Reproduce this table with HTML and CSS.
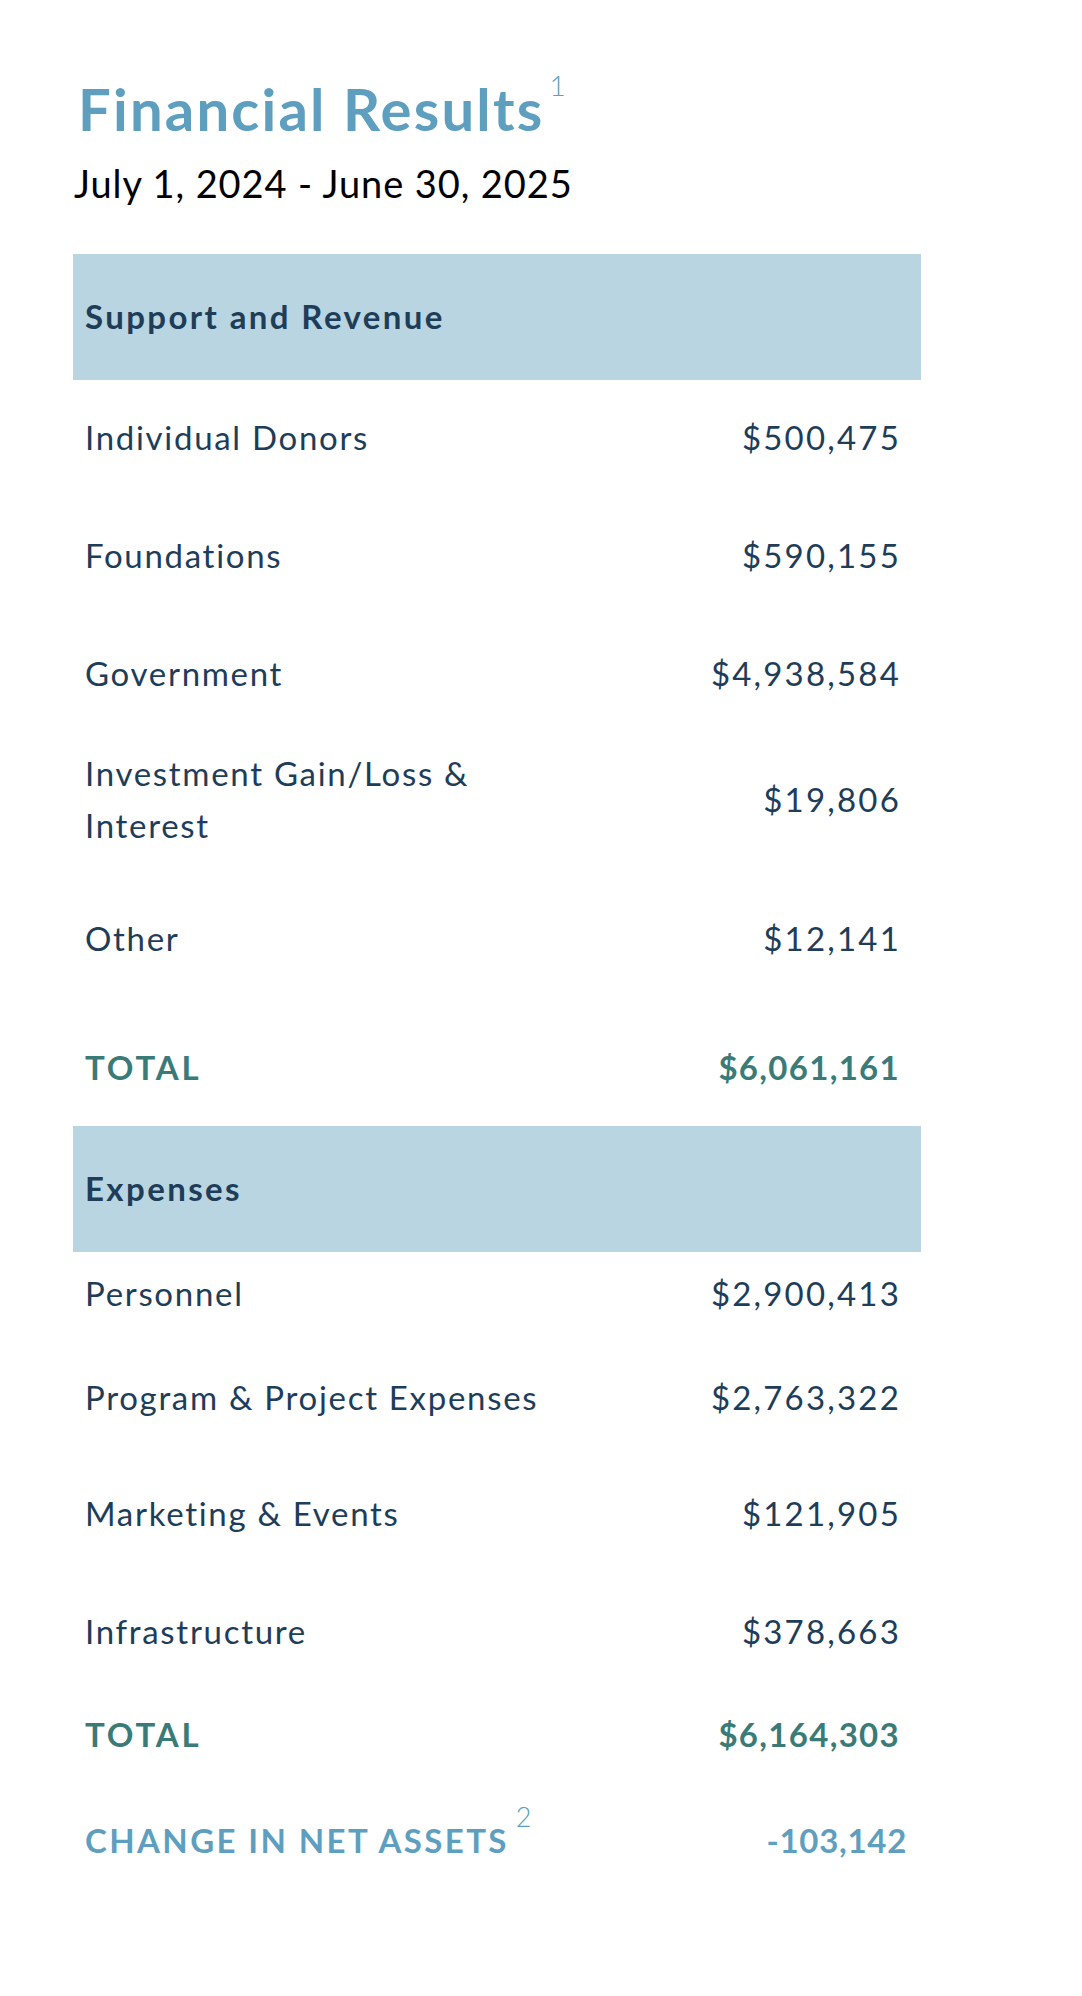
FILE: index.html
```html
<!DOCTYPE html>
<html lang="en">
<head>
<meta charset="utf-8">
<title>Financial Results</title>
<link rel="stylesheet" href="styles.css">
</head>
<body>
<main class="page">
  <h1 class="title">Financial Results<sup class="note">1</sup></h1>
  <p class="period">July 1, 2024 - June 30, 2025</p>
  <table class="fin">
    <tbody>
      <tr class="section"><th colspan="2">Support and Revenue</th></tr>
      <tr class="h116"><td class="label">Individual Donors</td><td class="amt">$500,475</td></tr>
      <tr class="h120"><td class="label">Foundations</td><td class="amt">$590,155</td></tr>
      <tr class="h116"><td class="label">Government</td><td class="amt">$4,938,584</td></tr>
      <tr class="h136"><td class="label">Investment Gain/Loss &amp;<br>Interest</td><td class="amt">$19,806</td></tr>
      <tr class="h142"><td class="label">Other</td><td class="amt">$12,141</td></tr>
      <tr class="h116 total"><td class="label">TOTAL</td><td class="amt">$6,061,161</td></tr>
      <tr class="section"><th colspan="2">Expenses</th></tr>
      <tr class="h84"><td class="label">Personnel</td><td class="amt">$2,900,413</td></tr>
      <tr class="h124"><td class="label">Program &amp; Project Expenses</td><td class="amt">$2,763,322</td></tr>
      <tr class="h108"><td class="label">Marketing &amp; Events</td><td class="amt">$121,905</td></tr>
      <tr class="h128"><td class="label">Infrastructure</td><td class="amt">$378,663</td></tr>
      <tr class="h78 total"><td class="label">TOTAL</td><td class="amt">$6,164,303</td></tr>
      <tr class="h134 change"><td class="label">CHANGE IN NET ASSETS<sup class="note">2</sup></td><td class="amt">-103,142</td></tr>
    </tbody>
  </table>
</main>
</body>
</html>
```

FILE: styles.css
```css
html, body {
  margin: 0;
  padding: 0;
  background: #ffffff;
}

body {
  font-family: "Lato", "Liberation Sans", sans-serif;
  color: #1e3d59;
}

.page {
  padding: 74px 0 80px 73px;
  width: 848px;
}

.title {
  margin: 0 0 0 5px;
  font-size: 58px;
  line-height: 70px;
  font-weight: 700;
  letter-spacing: 2.2px;
  color: #5e9fbf;
}

.note {
  font-size: 28px;
  font-weight: 300;
  line-height: 0;
  letter-spacing: 0;
  vertical-align: 35px;
  margin-left: 5px;
}

.period {
  margin: 16px 0 0 1px;
  font-size: 38px;
  line-height: 46px;
  letter-spacing: 0.9px;
  color: #000000;
}

.fin {
  margin-top: 48px;
  width: 848px;
  border-collapse: collapse;
  font-size: 33px;
  line-height: 52px;
}

.fin .section {
  height: 126px;
  background: #b9d5e1;
}

.fin .section th {
  padding: 0 12px 3px;
  text-align: left;
  font-weight: 700;
  letter-spacing: 2.4px;
  color: #1e3d59;
  vertical-align: middle;
}

.fin td {
  padding: 0 0 3px;
  vertical-align: middle;
}

.fin .label {
  padding-left: 12px;
  text-align: left;
  letter-spacing: 1.7px;
}

.fin .amt {
  padding-right: 20px;
  text-align: right;
  white-space: nowrap;
  letter-spacing: 2.2px;
}

.h78 { height: 78px; }
.h84 { height: 84px; }
.h108 { height: 108px; }
.h116 { height: 116px; }
.h120 { height: 120px; }
.h124 { height: 124px; }
.h128 { height: 128px; }
.h134 { height: 134px; }
.h136 { height: 136px; }
.h142 { height: 142px; }

.total td {
  font-weight: 700;
  color: #3a7b78;
}

.total .label {
  letter-spacing: 2.8px;
}

.total .amt {
  letter-spacing: 1.3px;
  padding-right: 21px;
}

.change td {
  font-weight: 700;
  color: #5e9fbf;
}

.change .label {
  letter-spacing: 2.4px;
}

.change .amt {
  letter-spacing: 0.7px;
  padding-right: 14px;
}

.change .note {
  margin-left: 7px;
  font-size: 27px;
  vertical-align: 26px;
}
```
